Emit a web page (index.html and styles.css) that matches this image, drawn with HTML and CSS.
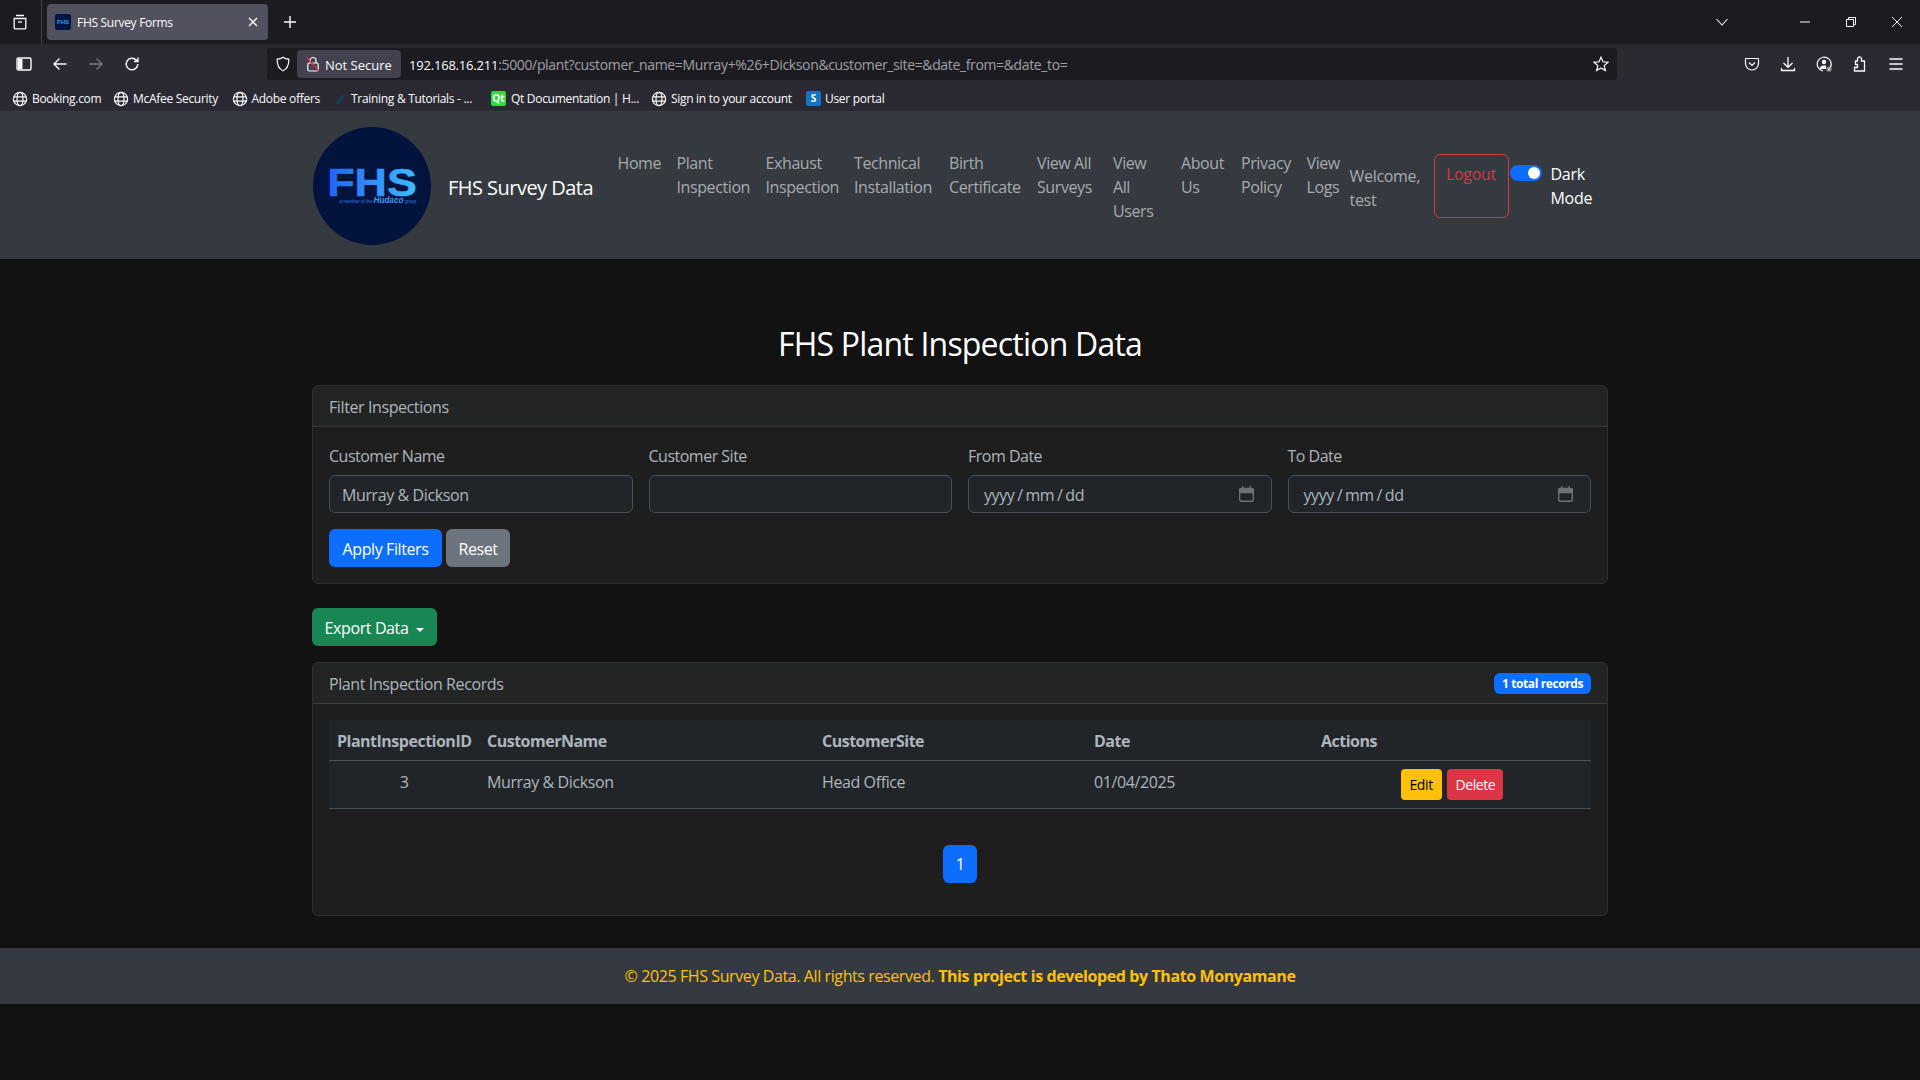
FILE: index.html
```html
<!DOCTYPE html>
<html lang="en">
<head>
    <meta charset="UTF-8">
    <meta name="viewport" content="width=device-width, initial-scale=1.0">
    <title>FHS Survey Forms</title>
    <link rel="stylesheet" href="styles.css">
</head>
<body>
    <svg class="defs" width="0" height="0">
        <defs>
            <symbol id="globe" viewBox="0 0 16 16">
                <g fill="none" stroke="currentColor" stroke-width="1.2">
                    <circle cx="8" cy="8" r="6.6"/>
                    <ellipse cx="8" cy="8" rx="3" ry="6.6"/>
                    <path d="M1.6 5.8h12.8M1.6 10.2h12.8"/>
                </g>
            </symbol>
            <linearGradient id="fhsGrad" x1="0" x2="1" y1="0" y2="0">
                <stop offset="0" stop-color="#2461f4"/>
                <stop offset="1" stop-color="#3dbdfe"/>
            </linearGradient>
        </defs>
    </svg>

    <!-- browser top -->
    <div class="tabbar">
        <div class="tab-side">
            <svg class="ico" viewBox="0 0 16 16" fill="none" stroke="#fbfbfe" stroke-width="1.3"><path d="M4 1.5h8M2.2 4.5h11.6v9.5a.8.8 0 0 1-.8.8H3a.8.8 0 0 1-.8-.8z"/><path d="M6 8h4"/></svg>
        </div>
        <div class="tab">
            <svg class="favicon" viewBox="0 0 16 16"><rect width="16" height="16" rx="2" fill="#031541"/><text class="svg-text" x="8" y="10" text-anchor="middle" font-size="6" font-weight="700" fill="#3a9bfa">FHS</text></svg>
            <span class="tab-title">FHS Survey Forms</span>
            <svg class="tab-x" viewBox="0 0 12 12" stroke="#fbfbfe" stroke-width="1.3"><path d="M2 2l8 8M10 2l-8 8"/></svg>
        </div>
        <svg class="tab-plus" viewBox="0 0 14 14" stroke="#fbfbfe" stroke-width="1.4"><path d="M7 1v12M1 7h12"/></svg>
        <svg class="tab-list" viewBox="0 0 12 8" fill="none" stroke="#fbfbfe" stroke-width="1.1"><path d="M.5 1l5.500 6 5.500-6"/></svg>
        <div class="win-btns">
            <svg class="win" viewBox="0 0 10 10" stroke="#fbfbfe"><path d="M0 5h10"/></svg>
            <svg class="win" viewBox="0 0 10 10" fill="none" stroke="#fbfbfe"><path d="M.5 2.500h7v7h-7zM2.500 2.500v-2h7v7h-2"/></svg>
            <svg class="win" viewBox="0 0 10 10" stroke="#fbfbfe"><path d="M0 0l10 10M10 0L0 10"/></svg>
        </div>
    </div>

    <div class="toolbar">
        <div class="tool-group">
            <span class="tool"><svg class="ico" viewBox="0 0 16 16" fill="none" stroke="#fbfbfe" stroke-width="1.4"><rect x="1" y="2" width="14" height="12" rx="1.5"/><rect x="2" y="3" width="4.5" height="10" fill="#fbfbfe" stroke="none"/></svg></span>
            <span class="tool"><svg class="ico" viewBox="0 0 16 16" fill="none" stroke="#fbfbfe" stroke-width="1.4"><path d="M14.5 8H2M7.5 2.500L2 8l5.500 5.500"/></svg></span>
            <span class="tool"><svg class="ico" viewBox="0 0 16 16" fill="none" stroke="#77767c" stroke-width="1.4"><path d="M1.500 8H14M8.500 2.500L14 8l-5.500 5.500"/></svg></span>
            <span class="tool"><svg class="ico" viewBox="0 0 16 16" fill="none" stroke="#fbfbfe" stroke-width="1.4"><path d="M13.800 8a5.800 5.800 0 1 1-1.700-4.100L14 5.500M14 1.500v4h-4"/></svg></span>
        </div>
        <div class="urlbar">
            <svg class="ico shield" viewBox="0 0 16 16" fill="none" stroke="#fbfbfe" stroke-width="1.2"><path d="M8 1.200c1.800 1.300 3.700 1.800 5.800 2 .2 5-1 9.300-5.800 11.600C3.200 12.500 2 8.200 2.200 3.200c2.100-.2 4-.7 5.800-2z"/></svg>
            <span class="not-secure">
                <svg class="ico" viewBox="0 0 16 16" fill="none" stroke="#fbfbfe" stroke-width="1.2"><rect x="2.800" y="7" width="10.400" height="8" rx="1.500"/><path d="M5 7V4.500a3 3 0 0 1 6 0V7"/><path d="M1.500 1.500L14 15" stroke="#e22850" stroke-width="1.300"/></svg>
                <span class="not-secure-text">Not Secure</span>
            </span>
            <span class="url"><b>192.168.16.211</b>:5000/plant?customer_name=Murray+%26+Dickson&amp;customer_site=&amp;date_from=&amp;date_to=</span>
            <svg class="ico star" viewBox="0 0 16 16" fill="none" stroke="#fbfbfe" stroke-width="1.2"><path d="M8 1.200l2 4.600 5 .5-3.800 3.300 1.200 4.900L8 12l-4.400 2.500 1.200-4.900L1 6.300l5-.5z"/></svg>
        </div>
        <div class="tool-group right">
            <span class="tool"><svg class="ico" viewBox="0 0 16 16" fill="none" stroke="#fbfbfe" stroke-width="1.200"><path d="M2 2.500h12a.5.5 0 0 1 .5.5v4.500c0 3.800-3 6.500-6.500 6.500S1.500 11.300 1.500 7.500V3a.5.5 0 0 1 .5-.5z"/><path d="M5 6.500l3 3 3-3"/></svg></span>
            <span class="tool"><svg class="ico" viewBox="0 0 16 16" fill="none" stroke="#fbfbfe" stroke-width="1.300"><path d="M8 1v10M3.500 7L8 11.300 12.500 7M1.500 12v2.500h13V12"/></svg></span>
            <span class="tool"><svg class="ico" viewBox="0 0 16 16" fill="none" stroke="#fbfbfe" stroke-width="1.200"><path d="M12 14a7 7 0 1 0-5 1"/><circle cx="8" cy="6" r="2.200" fill="#fbfbfe" stroke="none"/><path d="M3.500 12.500c.5-2 2-3 4.500-3 1 0 1.500.2 2 .4v3.200H5z" fill="#fbfbfe" stroke="none"/><circle cx="13" cy="13" r="2" stroke="#a0a0a5"/></svg></span>
            <span class="tool"><svg class="ico" viewBox="0 0 16 16" fill="none" stroke="#fbfbfe" stroke-width="1.300"><path d="M2.500 15h10V5H9.500V3a2 2 0 0 0-2-2 2 2 0 0 0-2 2v2H3.500v3.500h2v3h-3z"/></svg></span>
            <span class="tool"><svg class="ico" viewBox="0 0 16 16" stroke="#fbfbfe" stroke-width="1.300"><path d="M1.500 3h13M1.500 8h13M1.500 13h13"/></svg></span>
        </div>
    </div>

    <div class="bookmarks">
        <span class="bm bm-booking"><svg class="bm-ico"><use href="#globe"/></svg>Booking.com</span>
        <span class="bm bm-mcafee"><svg class="bm-ico"><use href="#globe"/></svg>McAfee Security</span>
        <span class="bm bm-adobe"><svg class="bm-ico"><use href="#globe"/></svg>Adobe offers</span>
        <span class="bm bm-training"><svg class="bm-ico" viewBox="0 0 16 16" fill="#1c3a55"><path d="M1 15c3-1 4-3 5-5s3-5 6-6l3-1-2 3c-1 3-3 6-7 7z"/></svg>Training &amp; Tutorials - ...</span>
        <span class="bm bm-qt"><span class="qt-ico">Qt</span>Qt Documentation | H...</span>
        <span class="bm bm-sign"><svg class="bm-ico"><use href="#globe"/></svg>Sign in to your account</span>
        <span class="bm bm-user"><span class="s-ico">S</span>User portal</span>
    </div>

    <!-- site nav -->
    <nav class="site-nav">
        <div class="container nav-inner">
            <svg class="logo" viewBox="0 0 120 120">
                <circle cx="60" cy="60" r="60" fill="#02133d"/>
                <text class="svg-text" x="60" y="70" text-anchor="middle" font-weight="700" font-size="39" textLength="91" lengthAdjust="spacingAndGlyphs" fill="url(#fhsGrad)" stroke="url(#fhsGrad)" stroke-width=".6">FHS</text>
                <text class="svg-text" x="105" y="77" text-anchor="end" font-size="4.600" fill="#2f7fe8">a member of the <tspan font-size="8.300" font-weight="700" font-style="italic" fill="#3f9bf5">Hudaco</tspan> group</text>
            </svg>
            <a class="brand" href="#">FHS Survey Data</a>
            <ul class="nav-links">
                <li style="width:59px"><a href="#">Home</a></li>
                <li style="width:89px"><a href="#">Plant<br>Inspection</a></li>
                <li style="width:88.5px"><a href="#">Exhaust<br>Inspection</a></li>
                <li style="width:95px"><a href="#">Technical<br>Installation</a></li>
                <li style="width:88px"><a href="#">Birth<br>Certificate</a></li>
                <li style="width:76px"><a href="#">View All<br>Surveys</a></li>
                <li style="width:68px"><a href="#">View<br>All<br>Users</a></li>
                <li style="width:60px"><a href="#">About<br>Us</a></li>
                <li style="width:65.5px"><a href="#">Privacy<br>Policy</a></li>
                <li style="width:51px"><a href="#">View<br>Logs</a></li>
            </ul>
            <span class="welcome">Welcome,<br>test</span>
            <a class="logout" href="#">Logout</a>
            <div class="mode">
                <span class="switch"></span>
                <span class="mode-label">Dark<br>Mode</span>
            </div>
        </div>
    </nav>

    <main class="container page">
        <h1 class="page-title">FHS Plant Inspection Data</h1>

        <section class="card filter-card">
            <div class="card-head">Filter Inspections</div>
            <form class="card-body">
                <div class="filter-row">
                    <div class="field">
                        <label>Customer Name</label>
                        <div class="input"><span>Murray &amp; Dickson</span></div>
                    </div>
                    <div class="field">
                        <label>Customer Site</label>
                        <div class="input"></div>
                    </div>
                    <div class="field">
                        <label>From Date</label>
                        <div class="input date"><span>yyyy / mm / dd</span>
                            <svg class="cal" viewBox="0 0 15 16" fill="none" stroke="#6d7278" stroke-width="1.400"><rect x=".7" y="2.500" width="13.600" height="12.800" rx="1.500"/><path d="M.7 3.500h13.600V6.500H.7z" fill="#6d7278"/><path d="M3.800 0v3M11.200 0v3"/></svg>
                        </div>
                    </div>
                    <div class="field">
                        <label>To Date</label>
                        <div class="input date"><span>yyyy / mm / dd</span>
                            <svg class="cal" viewBox="0 0 15 16" fill="none" stroke="#6d7278" stroke-width="1.400"><rect x=".7" y="2.500" width="13.600" height="12.800" rx="1.500"/><path d="M.7 3.500h13.600V6.500H.7z" fill="#6d7278"/><path d="M3.800 0v3M11.200 0v3"/></svg>
                        </div>
                    </div>
                </div>
                <div class="filter-btns">
                    <button type="button" class="btn btn-blue">Apply Filters</button>
                    <button type="button" class="btn btn-grey">Reset</button>
                </div>
            </form>
        </section>

        <button type="button" class="btn btn-green export">Export Data<span class="caret"></span></button>

        <section class="card records-card">
            <div class="card-head records-head">
                <span class="records-title">Plant Inspection Records</span>
                <span class="badge">1 total records</span>
            </div>
            <div class="card-body">
                <table class="records">
                    <thead>
                        <tr>
                            <th class="c-id">PlantInspectionID</th>
                            <th class="c-name">CustomerName</th>
                            <th class="c-site">CustomerSite</th>
                            <th class="c-date">Date</th>
                            <th>Actions</th>
                        </tr>
                    </thead>
                    <tbody>
                        <tr>
                            <td class="center">3</td>
                            <td>Murray &amp; Dickson</td>
                            <td>Head Office</td>
                            <td>01/04/2025</td>
                            <td class="center actions">
                                <button type="button" class="btn-sm btn-yellow">Edit</button>
                                <button type="button" class="btn-sm btn-red">Delete</button>
                            </td>
                        </tr>
                    </tbody>
                </table>
                <div class="pager"><a href="#" class="page-no">1</a></div>
            </div>
        </section>
    </main>

    <footer class="site-foot">
        © 2025 FHS Survey Data. All rights reserved. <strong>This project is developed by Thato Monyamane</strong>
    </footer>
</body>
</html>
```

FILE: styles.css
```css
* {
    box-sizing: border-box;
}
body {
    margin: 0;
    background: #121212;
    color: #e0e0e0;
    font-family: "Open Sans", "Noto Sans", sans-serif;
    font-size: 16px;
    line-height: 24px;
    letter-spacing: -0.4px;
}
.defs {
    position: absolute;
}
.svg-text {
    font-family: "Liberation Sans", sans-serif;
    letter-spacing: 0;
}
a {
    text-decoration: none;
    color: inherit;
}

/* browser top */
.tabbar {
    display: flex;
    align-items: center;
    height: 44px;
    background: #1c1b22;
    font-size: 12px;
    color: #fbfbfe;
    letter-spacing: -0.3px;
}
.tab-side {
    width: 42px;
    height: 44px;
    padding-right: 2px;
    display: flex;
    align-items: center;
    justify-content: center;
    border-right: 1px solid #45444b;
}
.ico {
    width: 16px;
    height: 16px;
    flex: none;
}
.tab {
    display: flex;
    align-items: center;
    width: 221px;
    height: 36px;
    margin-left: 5px;
    padding: 0 9px 0 8px;
    background: #52525e;
    border-radius: 4px;
}
.favicon {
    width: 16px;
    height: 16px;
}
.tab-title {
    margin-left: 6px;
    padding-top: 2px;
    flex: 1;
}
.tab-x {
    width: 12px;
    height: 12px;
}
.tab-plus {
    width: 14px;
    height: 14px;
    margin-left: 15px;
}
.tab-list {
    width: 12px;
    height: 8px;
    margin-left: auto;
}
.win-btns {
    display: flex;
    margin-left: 54px;
}
.win {
    width: 10px;
    height: 10px;
    margin: 0 18px;
}
.toolbar {
    display: flex;
    align-items: center;
    height: 40px;
    background: #2b2a33;
    color: #fbfbfe;
    padding-left: 6px;
    letter-spacing: -0.3px;
}
.tool-group {
    display: flex;
}
.tool {
    width: 36px;
    display: flex;
    justify-content: center;
}
.tool-group.right {
    margin-left: 117px;
}
.urlbar {
    display: flex;
    align-items: center;
    width: 1350px;
    height: 32px;
    margin-left: 117px;
    background: #1c1b22;
    border-radius: 4px;
    font-size: 13px;
}
.shield {
    margin: 0 6px 0 8px;
}
.not-secure {
    display: flex;
    align-items: center;
    gap: 4px;
    width: 104px;
    height: 28px;
    padding-left: 8px;
    background: #42414d;
    border-radius: 4px;
    letter-spacing: 0;
}
.not-secure-text {
    padding-top: 2px;
}
.url {
    margin-left: 8px;
    padding-top: 2px;
    color: #a0a0a6;
    flex: 1;
    font-size: 14px;
    letter-spacing: -0.36px;
}
.url b {
    color: #fbfbfe;
    font-size: 13px;
    font-weight: 400;
    letter-spacing: -0.2px;
}
.star {
    margin-right: 8px;
}
.bookmarks {
    display: flex;
    align-items: center;
    height: 28px;
    background: #2b2a33;
    border-bottom: 1px solid #3a3a44;
    color: #fbfbfe;
    font-size: 12px;
    padding: 2px 0 0 12px;
    letter-spacing: -0.3px;
}
.bm {
    display: flex;
    align-items: center;
    gap: 4px;
}
.bm-ico {
    width: 16px;
    height: 16px;
    flex: none;
}
.bm-booking { width: 101px; }
.bm-mcafee { width: 118.5px; }
.bm-adobe { width: 99.5px; }
.bm-training { width: 160px; }
.bm-qt { width: 160px; gap: 5px; }
.bm-sign { width: 155px; }
.qt-ico,
.s-ico {
    width: 15px;
    height: 15px;
    border-radius: 2px;
    font-size: 10px;
    font-weight: 700;
    line-height: 15px;
    text-align: center;
    color: #fff;
    letter-spacing: 0;
}
.qt-ico {
    background: #2cde3f;
}
.s-ico {
    background: #1474c4;
}

/* site nav */
.container {
    width: 1296px;
    margin: 0 auto;
}
.site-nav {
    background: #343a40;
    height: 147px;
}
.nav-inner {
    display: flex;
    align-items: flex-start;
    padding-top: 15px;
}
.logo {
    width: 118px;
    height: 118px;
    margin-left: 1px;
    flex: none;
}
.brand {
    width: 145.5px;
    margin: 46px 16px 0 17px;
    font-size: 20px;
    line-height: 30px;
    letter-spacing: -0.53px;
    color: #fff;
    white-space: nowrap;
    flex: none;
}
.nav-links {
    display: flex;
    list-style: none;
    margin: 16px 0 0;
    padding: 0;
}
.nav-links li {
    padding: 8px;
    color: #a7abae;
    white-space: nowrap;
}
.welcome {
    margin-top: 37px;
    width: 84px;
    color: #a7abae;
    white-space: nowrap;
    letter-spacing: -0.3px;
}
.logout {
    width: 75px;
    height: 64px;
    margin-top: 27px;
    padding-top: 7px;
    border: 1px solid #dc3545;
    border-radius: 6px;
    color: #dc3545;
    text-align: center;
    letter-spacing: -0.3px;
}
.mode {
    display: flex;
    margin-top: 35px;
    margin-left: 1px;
    color: #fff;
    letter-spacing: -0.3px;
}
.switch {
    position: relative;
    width: 32px;
    height: 16px;
    margin-top: 3px;
    border-radius: 8px;
    background: #0d6efd;
}
.switch::after {
    content: "";
    position: absolute;
    right: 2px;
    top: 2px;
    width: 12px;
    height: 12px;
    border-radius: 50%;
    background: #fff;
}
.mode-label {
    margin-left: 9px;
}

/* page */
.page-title {
    margin: 0;
    padding-top: 65px;
    height: 126px;
    font-size: 32px;
    line-height: 40px;
    font-weight: 400;
    letter-spacing: -0.8px;
    text-align: center;
    color: #fff;
}
.card {
    background: #1e1e1e;
    border: 1px solid #2e2f30;
    border-radius: 6px;
}
.card-head {
    height: 41px;
    padding: 9px 16px 0;
    background: #232524;
    border-bottom: 1px solid #3c3d3e;
    border-radius: 6px 6px 0 0;
    color: #adb5bd;
}
.card-body {
    padding: 16px;
}
.filter-card .card-body {
    padding-top: 17px;
}
.filter-row {
    display: grid;
    grid-template-columns: repeat(4, 1fr);
    gap: 16px;
}
.field label {
    display: block;
    margin-bottom: 7px;
    color: #adb5bd;
    letter-spacing: -0.5px;
}
.input {
    display: flex;
    align-items: center;
    justify-content: space-between;
    height: 38px;
    padding: 0 12px;
    background: #212529;
    border: 1px solid #495057;
    border-radius: 6px;
    color: #adb5bd;
}
.input span {
    padding-top: 2px;
}
.input.date {
    padding: 0 17px 0 15px;
    word-spacing: -1px;
}
.cal {
    width: 15px;
    height: 16px;
    flex: none;
}
.filter-btns {
    display: flex;
    gap: 4px;
    margin-top: 16px;
}
.btn {
    height: 38px;
    padding: 2px 0 0;
    border: 0;
    border-radius: 6px;
    color: #fff;
    font: inherit;
    letter-spacing: inherit;
}
.btn-blue {
    width: 113px;
    background: #0d6efd;
}
.btn-grey {
    width: 64px;
    background: #6c757d;
}
.btn-green {
    width: 125px;
    background: #198754;
}
.export {
    display: block;
    margin: 24px 0 16px;
}
.caret {
    display: inline-block;
    margin-left: 8px;
    vertical-align: 2px;
    border-top: 4px solid #fff;
    border-left: 4px solid transparent;
    border-right: 4px solid transparent;
}
.records-head {
    display: flex;
    justify-content: space-between;
    align-items: center;
    padding-top: 0;
}
.records-title {
    padding-top: 2px;
}
.badge {
    padding: 0 8px;
    height: 21px;
    background: #0d6efd;
    border-radius: 6px;
    color: #fff;
    font-size: 12px;
    font-weight: 700;
    line-height: 21px;
    letter-spacing: -0.4px;
}
.records {
    width: 100%;
    border-collapse: collapse;
    table-layout: fixed;
    background: #212529;
    color: #adb5bd;
}
.records th {
    height: 40px;
    padding: 2px 8px 0;
    text-align: left;
    font-weight: 700;
    letter-spacing: -0.5px;
    border-bottom: 1px solid #495057;
}
.records td {
    height: 48px;
    padding: 0 8px 4px;
    border-bottom: 1px solid #495057;
}
.c-id { width: 150px; }
.c-name { width: 335px; }
.c-site { width: 272px; }
.c-date { width: 227px; }
.center {
    text-align: center;
}
.records td.actions {
    padding-bottom: 0;
}
.btn-sm {
    height: 31px;
    padding: 2px 0 0;
    border: 0;
    border-radius: 4px;
    font: inherit;
    font-size: 14px;
    letter-spacing: inherit;
}
.btn-yellow {
    width: 41px;
    background: #ffc107;
    color: #000;
}
.btn-red {
    width: 56px;
    margin-left: 2px;
    background: #dc3545;
    color: #fff;
}
.pager {
    display: flex;
    justify-content: center;
    margin: 36px 0 16px;
}
.page-no {
    width: 34px;
    height: 38px;
    background: #0d6efd;
    border-radius: 6px;
    color: #fff;
    line-height: 38px;
    text-align: center;
}
.site-foot {
    height: 56px;
    margin-top: 32px;
    background: #343a40;
    color: #ffc107;
    text-align: center;
    line-height: 56px;
}
```
